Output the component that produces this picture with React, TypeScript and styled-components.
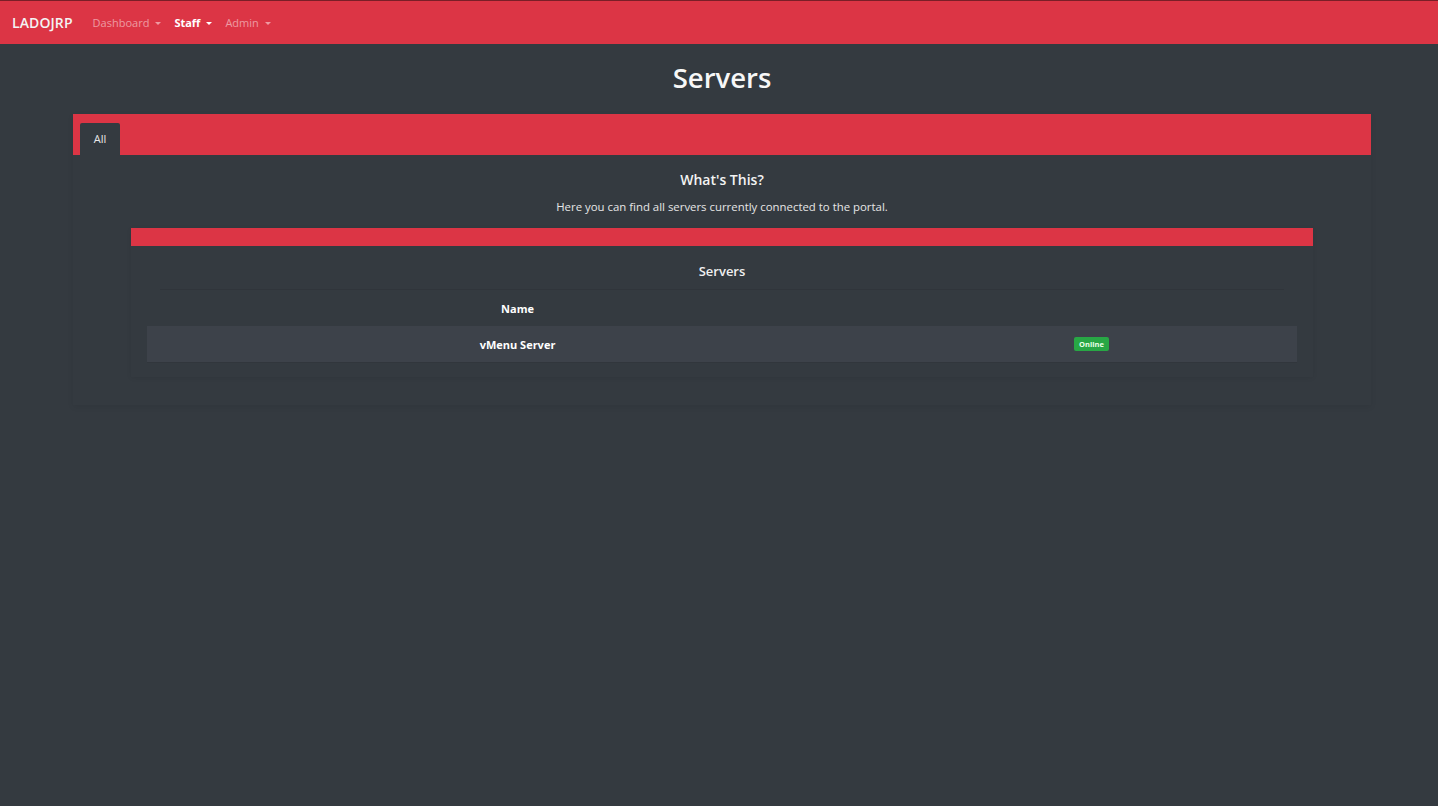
import React from "react";
import styled, { createGlobalStyle } from "styled-components";

const Global = createGlobalStyle`
  html, body { margin: 0; padding: 0; background: #343a40; }
  body { font-family: "Open Sans", "Noto Sans", sans-serif; color: #fff; min-height: 806px; }
  * { box-sizing: border-box; }
`;

const Page = styled.div`
  min-height: 806px;
  background: #343a40;
`;

const NavBar = styled.nav`
  height: 44px;
  background: #dc3545;
  border-top: 1px solid #7a1e27;
  display: flex;
  align-items: center;
  padding: 0 12px;
  gap: 20px;
`;

const Brand = styled.span`
  font-size: 14px;
  font-weight: 600;
  color: #f3f3f3;
  letter-spacing: 0.1px;
`;

const NavLinks = styled.div`
  display: flex;
  align-items: center;
  gap: 13px;
`;

const NavLink = styled.span<{ $active?: boolean }>`
  font-size: 11px;
  font-weight: ${(p) => (p.$active ? 700 : 400)};
  color: ${(p) => (p.$active ? "#fff" : "rgba(255,255,255,0.5)")};
  display: flex;
  align-items: center;
  gap: 6px;
`;

const Caret = styled.span`
  width: 0;
  height: 0;
  border-left: 3.5px solid transparent;
  border-right: 3.5px solid transparent;
  border-top: 3.5px solid currentColor;
  margin-top: 1px;
`;

const Title = styled.h1`
  margin: 0;
  padding: 15px 0 0 6px;
  height: 70px;
  text-align: center;
  font-size: 27.5px;
  font-weight: 600;
  color: #f7f7f7;
`;

const OuterCard = styled.section`
  margin: 0 67px 0 73px;
  box-shadow: 0 2px 6px rgba(0, 0, 0, 0.07);
  padding-bottom: 28px;
`;

const TabBar = styled.div`
  height: 41px;
  background: #dc3545;
  display: flex;
  align-items: flex-end;
  padding-left: 7px;
`;

const Tab = styled.div`
  width: 40px;
  height: 32px;
  background: #343a40;
  display: flex;
  align-items: center;
  justify-content: center;
  font-size: 11px;
  color: #e8e8e8;
  border-radius: 2px 2px 0 0;
  padding-bottom: 1px;
`;

const Intro = styled.div`
  text-align: center;
  padding-top: 15px;
  height: 73px;
`;

const IntroTitle = styled.h4`
  margin: 0 0 10px;
  font-size: 14px;
  font-weight: 600;
  color: #f3f3f3;
`;

const IntroText = styled.p`
  margin: 0;
  font-size: 11.4px;
  color: #e6e6e6;
`;

const InnerCard = styled.div`
  margin: 0 58px;
  box-shadow: 0 1px 5px rgba(0, 0, 0, 0.07);
  padding-bottom: 14px;
`;

const InnerHeader = styled.div`
  height: 18px;
  background: #dc3545;
`;

const InnerBody = styled.div`
  padding: 16px 16px 0;
`;

const TableTitle = styled.h5`
  text-align: center;
  font-size: 13px;
  font-weight: 600;
  color: #f0f0f0;
  padding-bottom: 9px;
  margin: 0 13px;
  border-bottom: 1px solid #30353b;
`;

const Table = styled.div`
  display: grid;
  grid-template-columns: 741px 1fr;
`;

const Cell = styled.div<{ $head?: boolean; $striped?: boolean }>`
  height: ${(p) => (p.$head ? "36px" : "37px")};
  display: flex;
  align-items: center;
  justify-content: center;
  font-size: 11px;
  font-weight: 700;
  color: #fff;
  background: ${(p) => (p.$striped ? "#3d424a" : "transparent")};
  border-bottom: ${(p) => (p.$striped ? "1px solid #31363c" : "none")};
`;

const Badge = styled.span`
  background: #28a745;
  color: #e9ffe9;
  font-size: 7.5px;
  font-weight: 700;
  padding: 2px 5px;
  border-radius: 2px;
  margin-right: 2px;
`;

export default function App() {
  return (
    <Page>
      <Global />
      <NavBar>
        <Brand>LADOJRP</Brand>
        <NavLinks>
          <NavLink>
            Dashboard <Caret />
          </NavLink>
          <NavLink $active>
            Staff <Caret />
          </NavLink>
          <NavLink>
            Admin <Caret />
          </NavLink>
        </NavLinks>
      </NavBar>
      <Title>Servers</Title>
      <OuterCard>
        <TabBar>
          <Tab>All</Tab>
        </TabBar>
        <Intro>
          <IntroTitle>What's This?</IntroTitle>
          <IntroText>Here you can find all servers currently connected to the portal.</IntroText>
        </Intro>
        <InnerCard>
          <InnerHeader />
          <InnerBody>
            <TableTitle>Servers</TableTitle>
            <Table>
              <Cell $head>Name</Cell>
              <Cell $head />
              <Cell $striped>vMenu Server</Cell>
              <Cell $striped>
                <Badge>Online</Badge>
              </Cell>
            </Table>
          </InnerBody>
        </InnerCard>
      </OuterCard>
    </Page>
  );
}
